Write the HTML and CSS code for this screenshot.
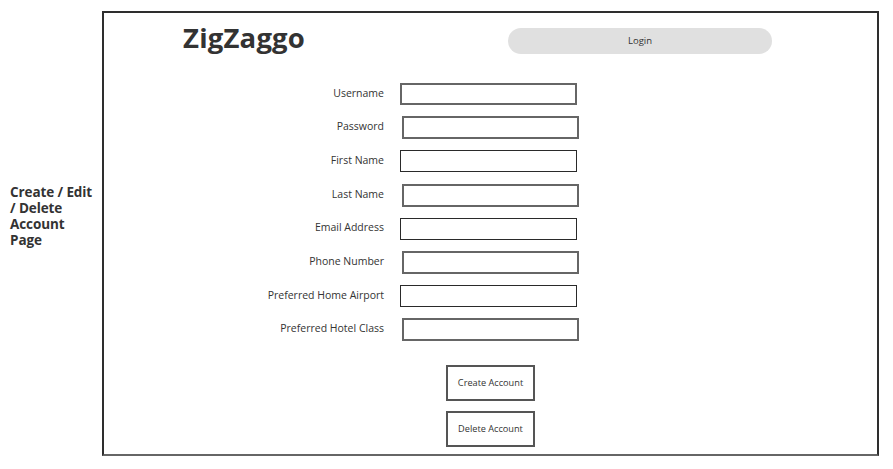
FILE: index.html
```html
<!DOCTYPE html>
<html lang="en">
<head>
<meta charset="utf-8">
<title>ZigZaggo - Create / Edit / Delete Account Page</title>
<link rel="stylesheet" href="styles.css">
</head>
<body>
<div class="page">
  <div class="side">
    <p class="side-label">Create / Edit / Delete Account Page</p>
  </div>
  <div class="frame">
    <header class="top">
      <h1 class="brand">ZigZaggo</h1>
      <button class="login" type="button">Login</button>
    </header>
    <form class="form">
      <div class="row"><label class="lbl">Username</label><span class="field grey"></span></div>
      <div class="row alt"><label class="lbl">Password</label><span class="field grey"></span></div>
      <div class="row"><label class="lbl">First Name</label><span class="field dark"></span></div>
      <div class="row alt"><label class="lbl">Last Name</label><span class="field grey"></span></div>
      <div class="row"><label class="lbl">Email Address</label><span class="field dark"></span></div>
      <div class="row alt"><label class="lbl">Phone Number</label><span class="field grey"></span></div>
      <div class="row"><label class="lbl">Preferred Home Airport</label><span class="field dark"></span></div>
      <div class="row alt"><label class="lbl">Preferred Hotel Class</label><span class="field grey"></span></div>
    </form>
    <div class="actions">
      <button class="btn" type="button">Create Account</button>
      <button class="btn" type="button">Delete Account</button>
    </div>
  </div>
</div>
</body>
</html>
```

FILE: styles.css
```css
* { box-sizing: border-box; }
html, body { margin: 0; padding: 0; background: #ffffff; }
body {
  font-family: "Open Sans", "Noto Sans", "Liberation Sans", sans-serif;
  color: #333333;
  width: 893px;
  height: 469px;
  overflow: hidden;
}
.page {
  display: flex;
  align-items: flex-start;
}
.side {
  width: 102px;
  padding: 184px 0 0 10px;
}
.side-label {
  margin: 0;
  font-size: 13.5px;
  font-weight: 700;
  line-height: 16px;
  color: #333333;
  width: 87px;
  letter-spacing: -0.1px;
}
.frame {
  margin-top: 11px;
  width: 777px;
  height: 445px;
  border: 2px solid #2e2e2e;
  border-bottom-color: #666666;
  display: flex;
  flex-direction: column;
}
.top {
  display: flex;
  align-items: center;
  height: 41px;
  padding: 14px 0 0 79px;
}
.brand {
  margin: -5px 0 0 0;
  font-size: 27.5px;
  font-weight: 700;
  line-height: 26px;
  color: #333333;
  letter-spacing: 0.2px;
  width: 325px;
}
.login {
  margin: 0;
  border: 0;
  width: 264px;
  height: 26px;
  border-radius: 13px;
  background: #e0e0e0;
  font-family: inherit;
  font-size: 9.5px;
  color: #333333;
  padding: 0;
}
.form {
  margin: 29px 0 0 0;
  display: grid;
  row-gap: 11.7px;
}
.row {
  display: flex;
  align-items: center;
  height: 22px;
}
.lbl {
  width: 280px;
  text-align: right;
  font-size: 10.5px;
  line-height: 14px;
  margin-top: -3px;
  color: #333333;
}
.field {
  display: block;
  margin-left: 16px;
  width: 177px;
  height: 22px;
  border: 2px solid #666666;
  background: #ffffff;
}
.row.alt .field { margin-left: 18px; height: 23px; }
.field.dark { border-color: #2a2a2a; border-width: 1.5px; }
.actions {
  margin-top: 24px;
  display: flex;
  flex-direction: column;
  align-items: center;
  gap: 10px;
}
.btn {
  margin: 0;
  width: 89px;
  height: 36px;
  border: 2px solid #555555;
  background: #ffffff;
  font-family: inherit;
  font-size: 9.2px;
  color: #333333;
  padding: 0;
}
```
